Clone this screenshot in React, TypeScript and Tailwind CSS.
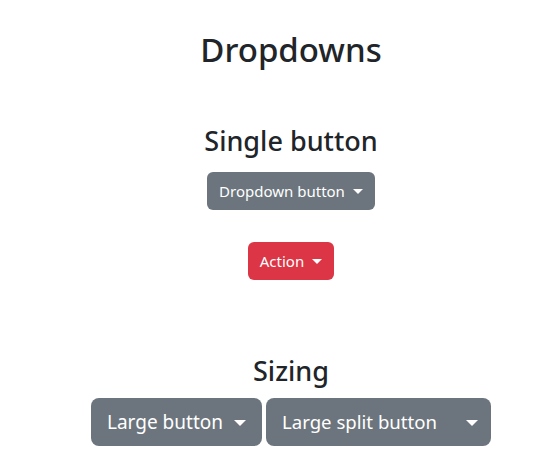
import React from "react";

const Caret = ({ big, split }: { big?: boolean; split?: boolean }) => (
  <span
    className={
      big
        ? `${split ? "ml-0" : "ml-[11px]"} inline-block align-[3px] border-x-[6px] border-t-[6px] border-x-transparent border-t-white`
        : "ml-[8px] inline-block align-[3px] border-x-[5px] border-t-[5px] border-x-transparent border-t-white"
    }
  />
);

const App = () => {
  return (
    <div className="min-h-screen bg-white pl-10 text-[#212529] font-['Noto_Sans',sans-serif]">
      <div className="flex flex-col items-center">
        <h1 className="mt-[30px] text-[33px] font-medium leading-[1.2]">Dropdowns</h1>

        <h2 className="mt-[55px] text-[27px] font-medium leading-[1.2]">Single button</h2>
        <button className="mt-[15px] h-[38px] rounded-[6px] bg-[#6c757d] px-3 text-[15px] text-white">
          Dropdown button
          <Caret />
        </button>
        <button className="mt-[32px] h-[38px] rounded-[6px] bg-[#dc3545] px-3 text-[15px] text-white">
          Action
          <Caret />
        </button>

        <h2 className="mt-[75px] text-[27px] font-medium leading-[1.2]">Sizing</h2>
        <div className="mt-[11px] flex gap-1">
          <button className="h-[48px] rounded-[8px] bg-[#6c757d] px-4 text-[19px] text-white">
            Large button
            <Caret big />
          </button>
          <div className="flex h-[48px] rounded-[8px] bg-[#6c757d] text-[18.6px] text-white">
            <button className="px-4">Large split button</button>
            <button className="pl-[13px] pr-[13px]">
              <Caret big split />
            </button>
          </div>
        </div>
      </div>
    </div>
  );
};

export default App;
